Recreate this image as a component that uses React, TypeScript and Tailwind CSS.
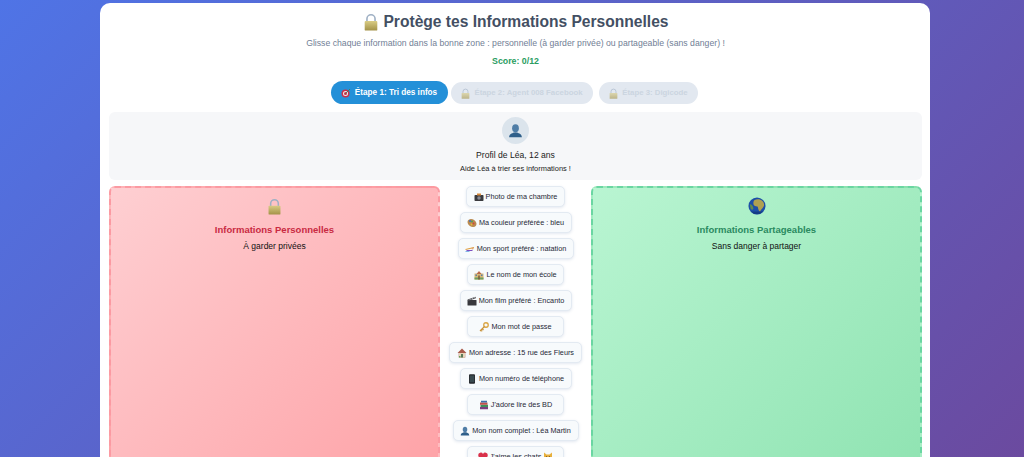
import React from "react";

type IconProps = { s?: number };

const Lock = ({ s = 10 }: IconProps) => (
  <svg width={s} height={s} viewBox="0 0 20 20" className="inline-block shrink-0">
    <defs>
      <linearGradient id="lk" x1="0" y1="0" x2="0" y2="1">
        <stop offset="0" stopColor="#d9cc84" />
        <stop offset="1" stopColor="#a39248" />
      </linearGradient>
    </defs>
    <path d="M5.5 10V6.5a4.5 4.5 0 0 1 9 0V10" fill="none" stroke="#9fb0c4" strokeWidth="1.8" />
    <rect x="3" y="9" width="14" height="10.5" rx="1" fill="url(#lk)" />
  </svg>
);
const Target = ({ s = 10 }: IconProps) => (
  <svg width={s} height={s} viewBox="0 0 20 20" className="inline-block shrink-0">
    <circle cx="9" cy="11" r="8" fill="#c9304a" />
    <circle cx="9" cy="11" r="5" fill="#eeeeee" />
    <circle cx="9" cy="11" r="3" fill="#c9304a" />
    <path d="M9 11 18 2" stroke="#3d7d5a" strokeWidth="1.8" />
  </svg>
);
const Person = ({ s = 10 }: IconProps) => (
  <svg width={s} height={s} viewBox="0 0 20 20" className="inline-block shrink-0">
    <ellipse cx="10" cy="7" rx="4.5" ry="5.5" fill="#4f7da6" />
    <path d="M1.5 19c0-5 4-5 6-6.500h5c2 1.500 6 1.500 6 6.500z" fill="#2f5f8a" />
  </svg>
);
const Globe = ({ s = 18 }: IconProps) => (
  <svg width={s} height={s} viewBox="0 0 20 20" className="inline-block shrink-0">
    <circle cx="10" cy="10" r="9.500" fill="#1c4fa8" />
    <path d="M7 3.500c3-1.500 7-1 9 1 2 2 2.500 5 1 6.500-1 2-3 3-3.500 5-2 0-2-4-3-5.500-2.500 0-4.500-1-4.500-3 0-1 0-3 1-4z" fill="#b0a050" />
    <path d="M2 8c2 0 4 2 4 5-1 2-2 1-3 0z" fill="#5f8a50" />
    <path d="M3 16a9.500 9.500 0 0 0 14 0z" fill="#0f2f70" opacity=".6" />
  </svg>
);
const Camera = ({ s = 10 }: IconProps) => (
  <svg width={s} height={s} viewBox="0 0 20 20" className="inline-block shrink-0">
    <rect x="1" y="6" width="18" height="12" rx="1.500" fill="#3a3a3e" />
    <rect x="6" y="3" width="8" height="4" fill="#d98a3a" />
    <circle cx="10" cy="12" r="3.500" fill="#8a8a92" />
  </svg>
);
const Palette = ({ s = 10 }: IconProps) => (
  <svg width={s} height={s} viewBox="0 0 20 20" className="inline-block shrink-0">
    <ellipse cx="10" cy="10" rx="9.500" ry="7.500" transform="rotate(35 10 10)" fill="#b98a50" />
    <circle cx="6" cy="6" r="2" fill="#3b6fc0" />
    <circle cx="10" cy="7" r="2" fill="#4f9f5a" />
    <circle cx="13" cy="11" r="2" fill="#d0463c" />
    <circle cx="9" cy="13" r="1.800" fill="#e6b93c" />
  </svg>
);
const Swim = ({ s = 10 }: IconProps) => (
  <svg width={s} height={s} viewBox="0 0 20 20" className="inline-block shrink-0">
    <path d="M1 11 18 7" stroke="#e0a040" strokeWidth="2.500" />
    <path d="M3 13h12" stroke="#7b4fc0" strokeWidth="2" />
    <circle cx="15" cy="9" r="2.200" fill="#e0a878" />
    <path d="M1 15h8" stroke="#5a9fe0" strokeWidth="1.500" />
  </svg>
);
const School = ({ s = 10 }: IconProps) => (
  <svg width={s} height={s} viewBox="0 0 20 20" className="inline-block shrink-0">
    <rect x="1" y="7" width="18" height="12" fill="#d8b878" />
    <path d="M10 2 15 8H5z" fill="#b96a4a" />
    <rect x="1" y="15" width="18" height="4" fill="#6f9f60" />
    <rect x="3" y="9" width="3" height="3" fill="#5a7fa8" />
    <rect x="14" y="9" width="3" height="3" fill="#5a7fa8" />
    <rect x="8.500" y="11" width="3" height="8" fill="#7a5a3a" />
  </svg>
);
const Clapper = ({ s = 10 }: IconProps) => (
  <svg width={s} height={s} viewBox="0 0 20 20" className="inline-block shrink-0">
    <rect x="1" y="8" width="18" height="11" rx="1" fill="#38383c" />
    <path d="M1 7 17 1.500l1 3L2 10z" fill="#55555a" />
    <path d="M5 5.500 7 8M10 4 12 6.500M14.500 2.500 16.500 5" stroke="#e8e8e8" strokeWidth="1.200" />
  </svg>
);
const Key = ({ s = 10 }: IconProps) => (
  <svg width={s} height={s} viewBox="0 0 20 20" className="inline-block shrink-0">
    <circle cx="14" cy="6" r="4.500" fill="none" stroke="#d9a441" strokeWidth="2.600" />
    <path d="M11 9 2 18M4 16l2.500 2.500M6.500 13.500 9 16" stroke="#c8923a" strokeWidth="2.400" />
  </svg>
);
const House = ({ s = 10 }: IconProps) => (
  <svg width={s} height={s} viewBox="0 0 20 20" className="inline-block shrink-0">
    <path d="M10 1 1 10h2.500v9h13v-9H19z" fill="#a85a4a" />
    <rect x="4" y="10" width="12" height="9" fill="#e6d4b8" />
    <rect x="8" y="12" width="4" height="7" fill="#5a7a5a" />
    <rect x="4" y="16" width="3" height="3" fill="#5f9f58" />
  </svg>
);
const Phone = ({ s = 10 }: IconProps) => (
  <svg width={s} height={s} viewBox="0 0 20 20" className="inline-block shrink-0">
    <rect x="4" y="0.500" width="12" height="19" rx="2" fill="#26282c" />
    <rect x="5.500" y="3" width="9" height="13.500" fill="#3a4a4f" />
  </svg>
);
const Books = ({ s = 10 }: IconProps) => (
  <svg width={s} height={s} viewBox="0 0 20 20" className="inline-block shrink-0">
    <rect x="2" y="14" width="16" height="4.500" fill="#7a3f7f" />
    <rect x="3" y="9.500" width="15" height="4.500" fill="#3f8f5a" />
    <rect x="2" y="5" width="15" height="4.500" fill="#c0504a" />
    <rect x="4" y="1.500" width="12" height="3.500" fill="#3f6fa8" />
  </svg>
);
const Heart = ({ s = 10 }: IconProps) => (
  <svg width={s} height={s} viewBox="0 0 20 20" className="inline-block shrink-0">
    <path d="M10 18.500C3 13 .5 10 .5 6.500A5 5 0 0 1 10 4a5 5 0 0 1 9.500 2.500C19.500 10 17 13 10 18.500z" fill="#d9304a" />
  </svg>
);
const Cat = ({ s = 10 }: IconProps) => (
  <svg width={s} height={s} viewBox="0 0 20 20" className="inline-block shrink-0">
    <path d="M2 1l5 4h6l5-4v11a8 7 0 0 1-16 0z" fill="#e8b03c" />
    <circle cx="7" cy="10" r="1.300" fill="#5a3a1a" />
    <circle cx="13" cy="10" r="1.300" fill="#5a3a1a" />
  </svg>
);

const chips: { Icon: React.FC<IconProps>; label: string; w: string; after?: boolean }[] = [
  { Icon: Camera, label: "Photo de ma chambre", w: "w-[99px]" },
  { Icon: Palette, label: "Ma couleur préférée : bleu", w: "w-[112px]" },
  { Icon: Swim, label: "Mon sport préféré : natation", w: "w-[116px]" },
  { Icon: School, label: "Le nom de mon école", w: "w-[97px]" },
  { Icon: Clapper, label: "Mon film préféré : Encanto", w: "w-[112px]" },
  { Icon: Key, label: "Mon mot de passe", w: "w-[97px]" },
  { Icon: House, label: "Mon adresse : 15 rue des Fleurs", w: "w-[133px]" },
  { Icon: Phone, label: "Mon numéro de téléphone", w: "w-[112px]" },
  { Icon: Books, label: "J'adore lire des BD", w: "w-[97px]" },
  { Icon: Person, label: "Mon nom complet : Léa Martin", w: "w-[126px]" },
  { Icon: Heart, label: "J'aime les chats", w: "w-[97px]", after: true },
];

export default function App() {
  return (
    <div className="h-[457px] overflow-hidden bg-[linear-gradient(135deg,#4f74e6_0%,#6b4a9f_100%)] pt-[3px] px-[100px] font-['Liberation_Sans',Arial,sans-serif] text-black antialiased">
      <div className="w-[830px] h-[600px] rounded-[10px] bg-white pl-[9px] pr-[8px]">
        <div className="flex flex-col items-center">
          <h1 className="mt-[9px] flex items-center gap-[3px] text-[15.6px] leading-[20px] font-bold text-[#434f63]">
            <Lock s={18} />
            <span>Protège tes Informations Personnelles</span>
          </h1>
          <p className="mt-[5px] text-[8.7px] leading-[12px] text-[#718096]">
            Glisse chaque information dans la bonne zone : personnelle (à garder privée) ou partageable (sans danger) !
          </p>
          <p className="mt-[6px] text-[8.8px] leading-[12px] font-bold text-[#2a9d62]">Score: 0/12</p>
        </div>
        <div className="mt-[14px] flex justify-center gap-[3px] pr-[3px]">
          <div className="flex h-[23px] w-[117px] items-center justify-center gap-[4px] rounded-full bg-[#2490d8] pt-[1px] text-[8.2px] font-bold text-white">
            <Target s={10} />
            <span>Étape 1: Tri des infos</span>
          </div>
          <div className="flex h-[22px] w-[142px] items-center justify-center gap-[3px] self-center rounded-full bg-[#e2e8f0] pt-[1px] text-[7.8px] font-bold text-[#cbd5e0]">
            <span className="flex opacity-60"><Lock s={11} /></span>
            <span>Étape 2: Agent 008 Facebook</span>
          </div>
          <div className="ml-[3px] flex h-[22px] w-[99px] items-center justify-center gap-[3px] self-center rounded-full bg-[#e2e8f0] pt-[1px] text-[7.8px] font-bold text-[#cbd5e0]">
            <span className="flex opacity-60"><Lock s={11} /></span>
            <span>Étape 3: Digicode</span>
          </div>
        </div>
        <div className="mt-[8px] flex h-[68px] flex-col items-center rounded-[6px] bg-[#f6f7f9] pt-[5px]">
          <div className="flex h-[27px] w-[27px] items-center justify-center rounded-full bg-[#dbe4ec]">
            <Person s={15} />
          </div>
          <p className="mt-[5px] text-[8.6px] leading-[12px] text-[#222]">Profil de Léa, 12 ans</p>
          <p className="mt-[3px] text-[7.45px] leading-[10px] text-[#222]">Aide Léa à trier ses informations !</p>
        </div>
        <div className="mt-[6px] grid grid-cols-[331px_151px_331px]">
          <div className="h-[400px] rounded-[6px] border-2 border-dashed border-[#fb9aa2] bg-[linear-gradient(135deg,#fecfd2_0%,#fe9a9f_100%)] pt-[10px] text-center">
            <div className="flex justify-center"><Lock s={17} /></div>
            <p className="mt-[8px] text-[9.5px] leading-[13px] font-bold text-[#c92a42]">Informations Personnelles</p>
            <p className="mt-[5px] text-[8.5px] leading-[11px] text-[#111]">À garder privées</p>
          </div>
          <div className="flex flex-col items-center gap-[5px]">
            {chips.map(({ Icon, label, w, after }) => (
              <div
                key={label}
                className={`flex h-[21px] shrink-0 items-center justify-center gap-[2px] rounded-[5px] border-[1.5px] border-[#e3eaf2] bg-[#f7fafc] pt-[1px] text-[7.3px] text-[#1f2937] shadow-[0_1px_3px_rgba(100,130,170,0.18)] ${w}`}
              >
                <Icon s={10} />
                <span>{label}</span>
                {after && <Cat s={10} />}
              </div>
            ))}
          </div>
          <div className="h-[400px] rounded-[6px] border-2 border-dashed border-[#6ad6a2] bg-[linear-gradient(135deg,#b9f5d2_0%,#88e0ac_100%)] pt-[9px] text-center">
            <div className="flex justify-center"><Globe s={18} /></div>
            <p className="mt-[8px] text-[9.5px] leading-[13px] font-bold text-[#2a8a5f]">Informations Partageables</p>
            <p className="mt-[5px] text-[8.5px] leading-[11px] text-[#111]">Sans danger à partager</p>
          </div>
        </div>
      </div>
    </div>
  );
}
